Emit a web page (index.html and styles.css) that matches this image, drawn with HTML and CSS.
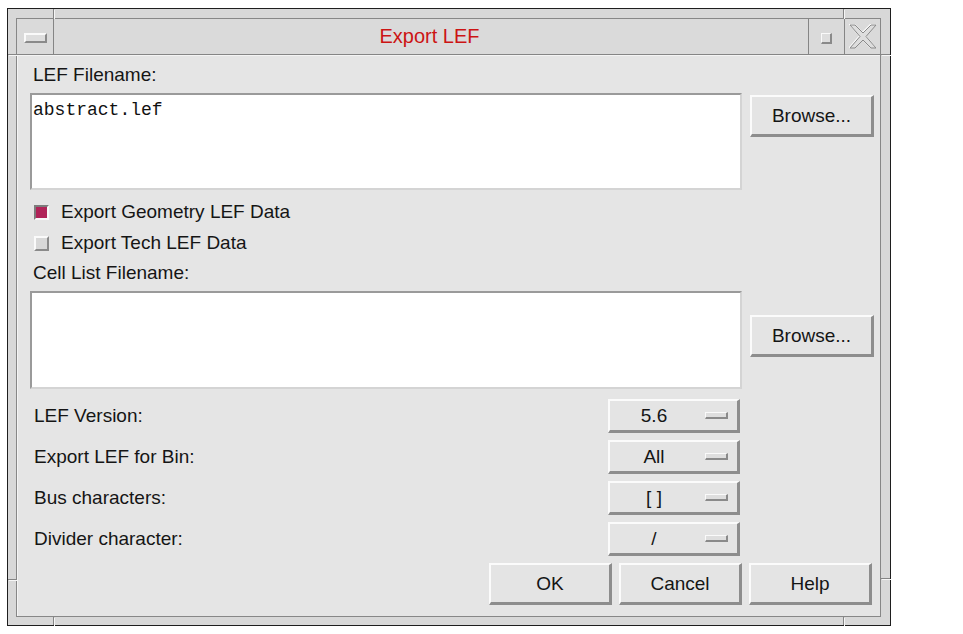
FILE: index.html
```html
<!DOCTYPE html>
<html>
<head>
<meta charset="utf-8">
<title>Export LEF</title>
<link rel="stylesheet" href="styles.css">
</head>
<body>
<div class="frame">
  <span class="handle h-tl-v"></span>
  <span class="handle h-tr-v"></span>
  <span class="handle h-lt-h"></span>
  <span class="handle h-rt-h"></span>
  <span class="handle h-lb-h"></span>
  <span class="handle h-rb-h"></span>
  <span class="handle h-bl-v"></span>
  <span class="handle h-br-v"></span>
  <div class="inner">
    <div class="titlebar">
      <div class="tb-btn tb-menu"><span class="menu-bar"></span></div>
      <div class="title">Export LEF</div>
      <div class="tb-btn tb-max"><span class="max-sq"></span></div>
      <div class="tb-btn tb-close">
        <svg width="28" height="25" viewBox="0 0 28 25">
          <polygon points="1,1 6,1 14,9 22,1 27,1 17,12.5 27,24 22,24 14,16 6,24 1,24 11,12.5" fill="#e2e2e2" stroke="#fafafa" stroke-width="1.2" transform="translate(-0.6,-0.6)"/>
          <polygon points="1,1 6,1 14,9 22,1 27,1 17,12.5 27,24 22,24 14,16 6,24 1,24 11,12.5" fill="#dedede" stroke="#8a8a8a" stroke-width="1"/>
        </svg>
      </div>
    </div>
    <div class="content">
      <div class="label lbl-first">LEF Filename:</div>
      <div class="field-row row-one">
        <div class="field"><span class="mono">abstract.lef</span></div>
        <div class="btn browse browse-top">Browse...</div>
      </div>
      <div class="check-row check-first">
        <span class="check on"></span><span class="check-label">Export Geometry LEF Data</span>
      </div>
      <div class="check-row check-second">
        <span class="check off"></span><span class="check-label">Export Tech LEF Data</span>
      </div>
      <div class="label lbl-second">Cell List Filename:</div>
      <div class="field-row row-two">
        <div class="field"></div>
        <div class="btn browse browse-mid">Browse...</div>
      </div>
      <div class="opt-list">
        <div class="opt-row"><span class="opt-label">LEF Version:</span><div class="btn opt"><span class="opt-val">5.6</span><span class="opt-ind"></span></div></div>
        <div class="opt-row"><span class="opt-label">Export LEF for Bin:</span><div class="btn opt"><span class="opt-val">All</span><span class="opt-ind"></span></div></div>
        <div class="opt-row"><span class="opt-label">Bus characters:</span><div class="btn opt"><span class="opt-val">[ ]</span><span class="opt-ind"></span></div></div>
        <div class="opt-row"><span class="opt-label">Divider character:</span><div class="btn opt"><span class="opt-val">/</span><span class="opt-ind"></span></div></div>
      </div>
      <div class="actions">
        <div class="btn action">OK</div>
        <div class="btn action">Cancel</div>
        <div class="btn action">Help</div>
      </div>
    </div>
  </div>
</div>
</body>
</html>
```
FILE: styles.css
```css
html, body {
  margin: 0;
  padding: 0;
  background: #ffffff;
}
body {
  padding: 8px 0 0 7px;
  font-family: "Liberation Sans", Arial, sans-serif;
  font-size: 19px;
  color: #151515;
}
.frame {
  position: relative;
  box-sizing: border-box;
  width: 884px;
  height: 618px;
  border: 1px solid #1e1e1e;
  background: #d8d8d8;
  padding: 9px 9px 8px 8px;
}
.handle {
  position: absolute;
  background: #858585;
  box-shadow: 1px 1px 0 #f6f6f6;
}
.h-tl-v { left: 45px; top: 0; width: 1px; height: 9px; }
.h-tr-v { left: 835px; top: 0; width: 1px; height: 9px; }
.h-lt-h { left: 0; top: 45px; width: 8px; height: 1px; }
.h-rt-h { right: 0; top: 45px; width: 9px; height: 1px; }
.h-lb-h { left: 0; top: 570px; width: 8px; height: 1px; }
.h-rb-h { right: 0; top: 569px; width: 9px; height: 1px; }
.h-bl-v { left: 45px; bottom: 0; width: 1px; height: 8px; }
.h-br-v { left: 835px; bottom: 0; width: 1px; height: 8px; }
.inner {
  box-sizing: border-box;
  height: 100%;
  border: 1px solid #878787;
  display: flex;
  flex-direction: column;
  background: #e5e5e5;
}
.titlebar {
  display: flex;
  height: 35px;
  border-bottom: 1px solid #858585;
  background: #dadada;
  flex: none;
}
.tb-btn {
  display: flex;
  align-items: center;
  justify-content: center;
  flex: none;
}
.tb-menu {
  width: 36px;
  border-right: 1px solid #858585;
}
.menu-bar {
  box-sizing: border-box;
  width: 23px;
  height: 10px;
  margin-top: 2px;
  background: #dedede;
  border-top: 2px solid #fafafa;
  border-left: 2px solid #fafafa;
  border-bottom: 2px solid #8a8a8a;
  border-right: 2px solid #8a8a8a;
}
.title {
  flex: 1;
  text-align: center;
  color: #cc1414;
  font-size: 20px;
  line-height: 35px;
  padding-right: 3px;
}
.tb-max {
  width: 35px;
  border-left: 1px solid #858585;
  border-right: 1px solid #858585;
}
.max-sq {
  box-sizing: border-box;
  width: 11px;
  height: 11px;
  margin-top: 4px;
  background: #dedede;
  border-top: 1px solid #fafafa;
  border-left: 1px solid #fafafa;
  border-bottom: 2px solid #8a8a8a;
  border-right: 2px solid #8a8a8a;
}
.tb-close {
  width: 35px;
}
.content {
  flex: 1;
  display: flex;
  flex-direction: column;
  padding-left: 12px;
  border-top: 1px solid #f4f4f4;
  border-left: 1px solid #f4f4f4;
}
.label {
  height: 22px;
  line-height: 22px;
  padding-left: 3px;
}
.lbl-first { margin-top: 8px; }
.lbl-second { margin-top: 8px; }
.field-row {
  display: flex;
  align-items: flex-start;
  gap: 8px;
}
.row-one { margin-top: 7px; }
.row-two { margin-top: 7px; }
.field {
  box-sizing: border-box;
  width: 712px;
  height: 97px;
  background: #ffffff;
  border: 2px solid;
  border-color: #9a9a9a #d4d4d4 #d4d4d4 #9a9a9a;
  padding: 3px 1px;
}
.row-two .field { height: 98px; }
.mono {
  font-family: "Liberation Mono", "Courier New", monospace;
  font-size: 18px;
  line-height: 20px;
  color: #111;
}
.btn {
  box-sizing: border-box;
  background: #e4e4e4;
  border-top: 2px solid #fbfbfb;
  border-left: 2px solid #fbfbfb;
  border-bottom: 3px solid #8d8d8d;
  border-right: 3px solid #8d8d8d;
  display: flex;
  align-items: center;
  justify-content: center;
}
.browse {
  width: 124px;
  height: 42px;
}
.browse-top { margin-top: 2px; }
.browse-mid { margin-top: 24px; }
.check-row {
  display: flex;
  align-items: center;
  height: 22px;
  padding-left: 4px;
}
.check-first { margin-top: 11px; }
.check-second { margin-top: 9px; }
.check {
  box-sizing: border-box;
  width: 15px;
  height: 15px;
  margin-right: 12px;
  flex: none;
}
.check.on {
  background: #b02358;
  border-top: 2px solid #7c7c7c;
  border-left: 2px solid #7c7c7c;
  border-bottom: 2px solid #f8f8f8;
  border-right: 2px solid #f8f8f8;
}
.check.off {
  background: #d8d8d8;
  border-top: 2px solid #fafafa;
  border-left: 2px solid #fafafa;
  border-bottom: 2px solid #8a8a8a;
  border-right: 2px solid #8a8a8a;
}
.opt-list {
  display: flex;
  flex-direction: column;
  gap: 7px;
  margin-top: 10px;
}
.opt-row {
  display: flex;
  align-items: center;
  justify-content: space-between;
  width: 710px;
}
.opt-label {
  padding-left: 4px;
}
.opt {
  width: 132px;
  height: 34px;
  justify-content: flex-start;
}
.opt-val {
  width: 88px;
  text-align: center;
}
.opt-ind {
  box-sizing: border-box;
  width: 23px;
  height: 7px;
  margin-left: 7px;
  background: #dedede;
  border-top: 1px solid #fafafa;
  border-left: 1px solid #fafafa;
  border-bottom: 2px solid #8a8a8a;
  border-right: 2px solid #8a8a8a;
}
.actions {
  display: flex;
  justify-content: flex-end;
  gap: 7px;
  margin-top: 7px;
  padding-right: 8px;
}
.action {
  width: 123px;
  height: 42px;
}
```
